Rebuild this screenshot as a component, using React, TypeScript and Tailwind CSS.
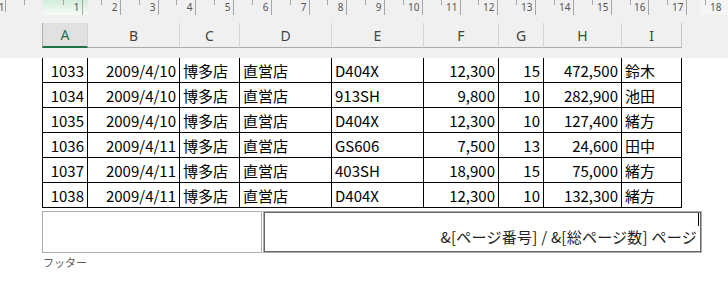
import React from 'react';

const rows = [
  ['1033', '2009/4/10', '博多店', '直営店', 'D404X', '12,300', '15', '472,500', '鈴木'],
  ['1034', '2009/4/10', '博多店', '直営店', '913SH', '9,800', '10', '282,900', '池田'],
  ['1035', '2009/4/10', '博多店', '直営店', 'D404X', '12,300', '10', '127,400', '緒方'],
  ['1036', '2009/4/11', '博多店', '直営店', 'GS606', '7,500', '13', '24,600', '田中'],
  ['1037', '2009/4/11', '博多店', '直営店', '403SH', '18,900', '15', '75,000', '緒方'],
  ['1038', '2009/4/11', '博多店', '直営店', 'D404X', '12,300', '10', '132,300', '緒方'],
];

const letters = ['A', 'B', 'C', 'D', 'E', 'F', 'G', 'H', 'I'];
// true = right aligned (numbers)
const rightAlign = [true, true, false, false, false, true, true, true, false];
const cols = 'grid-cols-[46px_92px_60px_92px_92px_75px_45px_78px_60px]';

function Ruler() {
  const step = 37.76;
  const nums = Array.from({ length: 18 }, (_, i) => i + 1);
  return (
    <svg width="728" height="15" className="block">
      <rect x="0" y="0" width="700" height="15" fill="#f0f0f0" />
      <rect x="700" y="0" width="28" height="15" fill="#f5f5f5" />
      <defs>
        <linearGradient id="sel" x1="0" y1="0" x2="0" y2="1">
          <stop offset="0" stopColor="#d3eddb" />
          <stop offset="1" stopColor="#f5fbf7" />
        </linearGradient>
      </defs>
      <rect x="43" y="0" width="45" height="15" fill="url(#sel)" />
      <line x1="5.5" y1="0" x2="5.5" y2="12" stroke="#a6a6a6" />
      <line x1="24.5" y1="0" x2="24.5" y2="5" stroke="#a6a6a6" />
      <text x="4.5" y="11" fontSize="10" fill="#555" textAnchor="end" fontFamily="'Noto Sans', sans-serif">1</text>
      {nums.map((n) => {
        const x = Math.round(82 + (n - 1) * step) + 0.5;
        const half = Math.round(82 + (n - 1) * step - step / 2) + 0.5;
        return (
          <g key={n}>
            <line x1={half} y1="0" x2={half} y2="5" stroke="#a6a6a6" />
            {x < 700 && <line x1={x} y1="0" x2={x} y2="15" stroke="#a6a6a6" />}
            <text x={x - 3} y="11" fontSize="10" fill="#555" textAnchor="end" fontFamily="'Noto Sans', sans-serif">
              {n}
            </text>
          </g>
        );
      })}
    </svg>
  );
}

export default function App() {
  return (
    <div className="w-[728px] h-[281px] bg-white overflow-hidden font-['Noto_Sans_CJK_JP',sans-serif]">
      <div className="h-[58px] bg-[#f0f0f0]">
        <Ruler />
        <div className={`mt-[8px] ml-[42px] grid ${cols} h-[25px] font-['Noto_Sans',sans-serif] text-[14px]`}>
          {letters.map((l, i) =>
            i === 0 ? (
              <div
                key={l}
                className="flex items-center justify-center bg-[#e1e1e1] border-l border-l-[#b0b0b0] border-r border-r-[#d4d4d4] border-b-2 border-b-[#217346] text-[#217346]"
              >
                {l}
              </div>
            ) : (
              <div
                key={l}
                className={`flex items-center justify-center border-r border-b border-b-[#ababab] text-[#444] ${
                  i === letters.length - 1 ? 'border-r-[#c6c6c6]' : 'border-r-[#d4d4d4]'
                }`}
              >
                {l}
              </div>
            )
          )}
        </div>
      </div>

      <div className="ml-[42px] w-[640px] text-[15px] text-black">
        {rows.map((r) => (
          <div key={r[0]} className={`grid ${cols} h-[25px]`}>
            {r.map((v, i) => (
              <div
                key={i}
                className={`flex items-center border-b border-r border-black whitespace-nowrap leading-none ${
                  i === 0 ? 'border-l' : ''
                } ${rightAlign[i] ? 'justify-end pr-[3px]' : 'justify-start pl-[3px]'}`}
              >
                {v}
              </div>
            ))}
          </div>
        ))}
      </div>

      <div className="mt-[3px] ml-[42px] flex h-[42px]">
        <div className="w-[220px] border border-[#acacac]" />
        <div className="ml-[1px] w-[439px] border border-[#acacac]">
          <div className="h-full border border-[#666] pr-[3px] text-right text-[15px] text-[#222]">
            <div className="h-[15px] flex justify-end">
              <span className="w-px h-[13px] bg-black -mr-[2px]" />
            </div>
            <div className="h-[17px] leading-[17px] whitespace-nowrap tracking-[0.25px]">
              &amp;[ページ番号] / &amp;[総ページ数] ページ
            </div>
          </div>
        </div>
      </div>
      <div className="ml-[43px] mt-[2px] text-[11px] leading-[14px] text-[#595959]">フッター</div>
    </div>
  );
}
